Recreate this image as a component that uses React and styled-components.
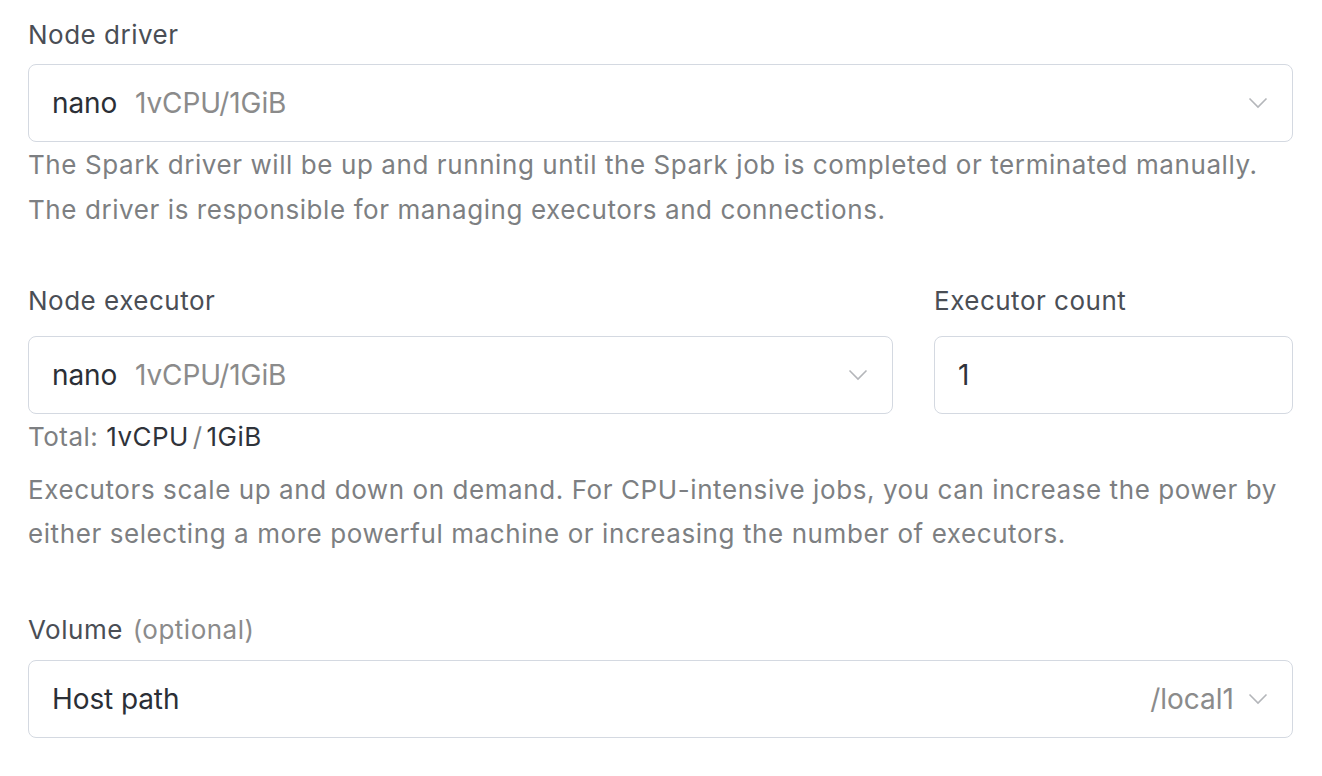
import styled, { createGlobalStyle } from "styled-components";

const GlobalStyle = createGlobalStyle`
  body {
    margin: 0;
    background: #fff;
    font-family: "Inter", "Liberation Sans", sans-serif;
  }
`;

const Chevron = () => (
  <svg width="20" height="12" viewBox="0 0 20 12" fill="none">
    <path d="M1.5 1.5L10 10L18.5 1.5" stroke="#b4b6ba" strokeWidth="1.6" />
  </svg>
);

const App = () => {
  return (
    <Page>
      <GlobalStyle />
      <Field>
        <Label>Node driver</Label>
        <Select>
          <Value>
            nano <Muted>1vCPU/1GiB</Muted>
          </Value>
          <Chevron />
        </Select>
        <Help $lh={45}>
          The Spark driver will be up and running until the Spark job is completed or terminated manually.
          <br />
          The driver is responsible for managing executors and connections.
        </Help>
      </Field>

      <Row>
        <Column>
          <Label $gap={17}>Node executor</Label>
          <Select>
            <Value>
              nano <Muted>1vCPU/1GiB</Muted>
            </Value>
            <Chevron />
          </Select>
        </Column>
        <CountColumn>
          <Label $gap={17}>Executor count</Label>
          <Input>1</Input>
        </CountColumn>
      </Row>
      <Total>
        Total: <strong>1vCPU</strong> <Slash>/</Slash> <strong>1GiB</strong>
      </Total>
      <Help $top={13} $lh={44}>
        Executors scale up and down on demand. For CPU-intensive jobs, you can increase the power by
        <br />
        either selecting a more powerful machine or increasing the number of executors.
      </Help>

      <Field $top={56}>
        <Label $gap={12}>
          Volume <Muted $small>(optional)</Muted>
        </Label>
        <Select>
          <Value>Host path</Value>
          <Right>
            <Muted>/local1</Muted>
            <Chevron />
          </Right>
        </Select>
      </Field>
    </Page>
  );
};

export default App;

const Page = styled.div`
  padding: 17px 29px 0 28px;
`;

const Field = styled.div`
  display: flex;
  flex-direction: column;
  margin-top: ${(p) => p.$top || 0}px;
`;

const Row = styled.div`
  display: flex;
  gap: 41px;
  margin-top: 51px;
`;

const Column = styled.div`
  flex: 1;
  display: flex;
  flex-direction: column;
`;

const CountColumn = styled.div`
  width: 359px;
  display: flex;
  flex-direction: column;
`;

const Label = styled.div`
  font-size: 26px;
  line-height: 36px;
  letter-spacing: 0.5px;
  color: #4a4e55;
  margin-bottom: ${(p) => p.$gap || 11}px;
`;

const Select = styled.div`
  box-sizing: border-box;
  height: 78px;
  border: 1.5px solid #d4d9e1;
  border-radius: 8px;
  display: flex;
  align-items: center;
  justify-content: space-between;
  padding: 0 24px 0 23px;
`;

const Input = styled(Select)`
  font-size: 28px;
  color: #2f333a;
`;

const Value = styled.div`
  font-size: 28px;
  color: #2b2f36;
  letter-spacing: -0.1px;
`;

const Muted = styled.span`
  color: #8b8b8b;
  margin-left: ${(p) => (p.$small ? 2 : 10)}px;
`;

const Right = styled.div`
  display: flex;
  align-items: center;
  gap: 14px;
  font-size: 28px;
`;

const Help = styled.div`
  font-size: 26px;
  line-height: ${(p) => p.$lh}px;
  letter-spacing: 0.58px;
  color: #7d7f82;
  margin-top: ${(p) => p.$top || 0}px;
`;

const Total = styled.div`
  font-size: 26px;
  line-height: 36px;
  letter-spacing: 0.5px;
  color: #7d7f82;
  margin-top: 5px;

  strong {
    font-weight: 400;
    color: #2f333a;
  }
`;

const Slash = styled.span`
  color: #7d7f82;
  margin: 0 -4px;
`;
